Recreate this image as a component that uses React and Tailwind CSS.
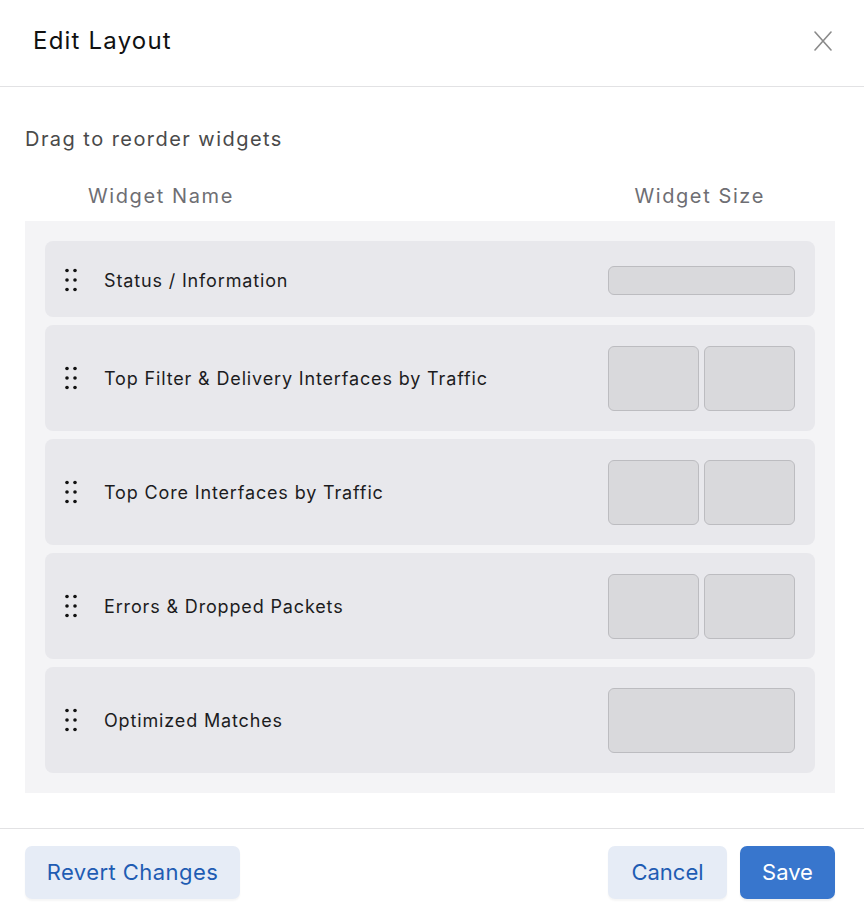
import React from "react";

const rows = [
  { name: "Status / Information", size: "bar" },
  { name: "Top Filter & Delivery Interfaces by Traffic", size: "two" },
  { name: "Top Core Interfaces by Traffic", size: "two" },
  { name: "Errors & Dropped Packets", size: "two" },
  { name: "Optimized Matches", size: "wide" },
];

function Handle() {
  return (
    <svg width="12" height="24" viewBox="0 0 12 24" className="shrink-0">
      {[2.5, 12, 21.5].map((y) =>
        [2, 10].map((x) => <circle key={x + "-" + y} cx={x} cy={y} r="1.8" fill="#111" />)
      )}
    </svg>
  );
}

function SizeBox({ size }) {
  const box = "bg-[#d9d9dc] border-[1.5px] border-[#bcbcc0] rounded-[6px]";
  if (size === "bar") return <div className={`${box} w-[187px] h-[29px]`} />;
  if (size === "wide") return <div className={`${box} w-[187px] h-[65px]`} />;
  return (
    <div className="flex gap-[5px]">
      <div className={`${box} w-[91px] h-[65px]`} />
      <div className={`${box} w-[91px] h-[65px]`} />
    </div>
  );
}

export default function App() {
  return (
    <div className="w-[864px] h-[913px] bg-white flex flex-col" style={{ fontFamily: "Inter, 'Noto Sans', sans-serif" }}>
      <div className="h-[87px] shrink-0 border-b border-[#e2e2e4] flex items-center justify-between pl-[33px] pr-[32px]">
        <h1 className="text-[24px] leading-none text-[#111] tracking-[1.2px] -mt-[4px]">Edit Layout</h1>
        <svg width="18" height="20" viewBox="0 0 18 20" className="-mt-[4px]">
          <path d="M1 1 L17 19 M17 1 L1 19" stroke="#8a8a8a" strokeWidth="1.6" strokeLinecap="round" />
        </svg>
      </div>
      <div className="flex-1 flex flex-col pl-[25px] pr-[29px] pt-[38px]">
        <p className="text-[20px] leading-[28px] text-[#4a4a4a] tracking-[1.45px]">Drag to reorder widgets</p>
        <div className="flex justify-between mt-[29px] pl-[63px] pr-[70px] text-[20px] leading-[28px] text-[#6e6e73] tracking-[1.6px]">
          <span>Widget Name</span>
          <span>Widget Size</span>
        </div>
        <div className="mt-[11px] bg-[#f4f4f6] p-[20px] flex flex-col gap-[8px]">
          {rows.map((r, i) => (
            <div
              key={i}
              className={`bg-[#e8e8ec] rounded-[8px] flex items-center pl-[20px] pr-[20px] ${i === 0 ? "h-[76px] pt-[2px]" : "h-[106px]"}`}
            >
              <Handle />
              <span className="ml-[27px] text-[18px] text-[#1c1c1e] flex-1 tracking-[0.85px]">{r.name}</span>
              <SizeBox size={r.size} />
            </div>
          ))}
        </div>
      </div>
      <div className="h-[85px] shrink-0 border-t border-[#e2e2e4] flex items-start justify-between pl-[25px] pr-[29px] pt-[17px]">
        <button className="h-[53px] w-[215px] rounded-[7px] bg-[#e6ecf6] text-[#1f5cb3] text-[22px] tracking-[0.45px] shadow-[0_2px_2px_rgba(0,0,0,0.04)]">
          Revert Changes
        </button>
        <div className="flex gap-[13px]">
          <button className="h-[53px] w-[119px] rounded-[7px] bg-[#e6ecf6] text-[#1f5cb3] text-[22px] shadow-[0_2px_2px_rgba(0,0,0,0.04)]">
            Cancel
          </button>
          <button className="h-[53px] w-[95px] rounded-[7px] bg-[#3876cd] text-white text-[22px] shadow-[0_2px_2px_rgba(0,0,0,0.06)]">
            Save
          </button>
        </div>
      </div>
    </div>
  );
}
